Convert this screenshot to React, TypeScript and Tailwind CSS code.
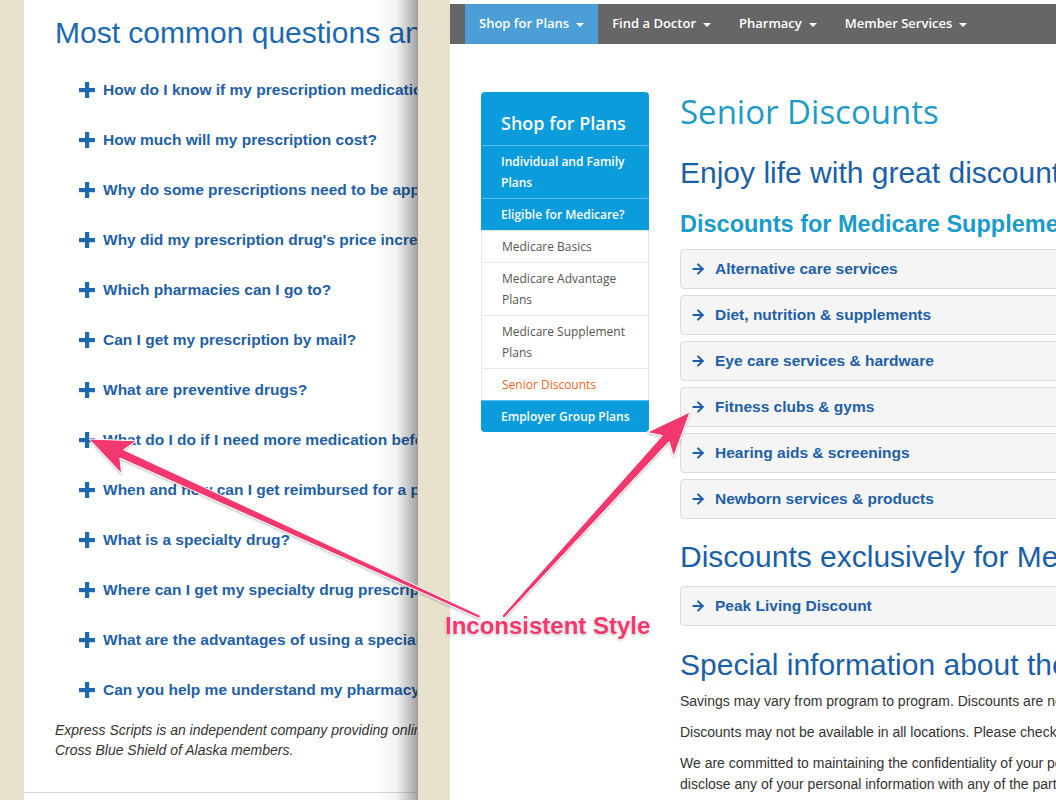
import { ArrowRight } from 'lucide-react';

const faqs = [
  'How do I know if my prescription medication is covered?',
  'How much will my prescription cost?',
  'Why do some prescriptions need to be approved?',
  "Why did my prescription drug's price increase?",
  'Which pharmacies can I go to?',
  'Can I get my prescription by mail?',
  'What are preventive drugs?',
  'What do I do if I need more medication before I can refill?',
  'When and how can I get reimbursed for a prescription?',
  'What is a specialty drug?',
  'Where can I get my specialty drug prescription filled?',
  'What are the advantages of using a specialty pharmacy?',
  'Can you help me understand my pharmacy benefits?',
];

const navItems = ['Shop for Plans', 'Find a Doctor', 'Pharmacy', 'Member Services'];

const sideItems = [
  { label: 'Individual and Family Plans', kind: 'blue' },
  { label: 'Eligible for Medicare?', kind: 'blue' },
  { label: 'Medicare Basics', kind: 'plain' },
  { label: 'Medicare Advantage Plans', kind: 'plain' },
  { label: 'Medicare Supplement Plans', kind: 'plain' },
  { label: 'Senior Discounts', kind: 'active' },
  { label: 'Employer Group Plans', kind: 'blue' },
];

const supplementDiscounts = [
  'Alternative care services',
  'Diet, nutrition & supplements',
  'Eye care services & hardware',
  'Fitness clubs & gyms',
  'Hearing aids & screenings',
  'Newborn services & products',
];

const helvetica = { fontFamily: '"Liberation Sans", Arial, sans-serif' };
const segoe = { fontFamily: '"Open Sans", "Liberation Sans", sans-serif' };

const PlusIcon = () => (
  <svg width="16" height="16" viewBox="0 0 16 16" className="shrink-0">
    <rect x="6" y="0" width="4.2" height="16" fill="#1e68b0" />
    <rect x="0" y="6" width="16" height="4.2" fill="#1e68b0" />
  </svg>
);

const Caret = () => (
  <svg width="8" height="4" viewBox="0 0 8 4" className="shrink-0 mt-[2px]">
    <polygon points="0,0 8,0 4,4" fill="white" />
  </svg>
);

// skitch-style tapering arrow
function arrowPoints(tail: [number, number], tip: [number, number]) {
  const dx = tip[0] - tail[0];
  const dy = tip[1] - tail[1];
  const len = Math.hypot(dx, dy);
  const ux = dx / len;
  const uy = dy / len;
  const px = -uy;
  const py = ux;
  const headLen = 44;
  const headW = 18;
  const notch = 8;
  const bx = tip[0] - ux * headLen;
  const by = tip[1] - uy * headLen;
  const nx = tip[0] - ux * (headLen - notch);
  const ny = tip[1] - uy * (headLen - notch);
  const wHead = 4.5;
  const wTail = 1.5;
  const pts: [number, number][] = [
    [tail[0] + px * wTail, tail[1] + py * wTail],
    [nx + px * wHead, ny + py * wHead],
    [bx + px * headW, by + py * headW],
    [tip[0], tip[1]],
    [bx - px * headW, by - py * headW],
    [nx - px * wHead, ny - py * wHead],
    [tail[0] - px * wTail, tail[1] - py * wTail],
  ];
  return pts.map((p) => `${p[0].toFixed(1)},${p[1].toFixed(1)}`).join(' ');
}

const LeftWindow = () => (
  <div className="relative ml-[24px] w-[394px] shrink-0 bg-white flex flex-col overflow-hidden whitespace-nowrap" style={helvetica}>
    <h1 className="pt-[15px] pl-[31px] text-[30px] leading-[36px] text-[#1b69b3]">Most common questions and answers</h1>
    <ul className="mt-[14px] pl-[55px]">
      {faqs.map((q) => (
        <li key={q} className="h-[50px] flex items-center gap-[8px]">
          <PlusIcon />
          <span className="text-[15.5px] font-bold text-[#1e5fa7]">{q}</span>
        </li>
      ))}
    </ul>
    <p className="mt-[5px] pl-[31px] text-[14px] leading-[20px] italic text-[#333]">
      Express Scripts is an independent company providing online pharmacy services to Blue
      <br />
      Cross Blue Shield of Alaska members.
    </p>
    <div className="mt-auto h-[8px] border-t border-[#d9d9d9]" />
    <div className="absolute right-0 top-0 bottom-0 w-[42px] bg-linear-to-r from-white/0 via-black/5 to-black/35 border-r border-[#9a9a9a]" />
  </div>
);

const Sidebar = () => (
  <div className="w-[168px] shrink-0 rounded-[4px] overflow-hidden self-start whitespace-normal" style={segoe}>
    <div className="h-[53px] bg-[#0b9cdb] flex items-end pb-[10px] px-[20px]">
      <span className="text-[18px] leading-[24px] font-semibold text-white whitespace-nowrap">Shop for Plans</span>
    </div>
    {sideItems.map((it) => (
      <div
        key={it.label}
        className={
          it.kind === 'blue'
            ? 'border-t border-[#5cc0ea] bg-[#0b9cdb] pl-[20px] pr-[8px] py-[5px] text-[12px] leading-[21px] font-semibold text-white'
            : it.kind === 'active'
              ? 'border-t border-x border-[#e6e6e6] bg-white px-[20px] py-[5px] text-[12px] leading-[21px] text-[#e8671e]'
              : 'border-t border-x border-[#e6e6e6] bg-white px-[20px] py-[5px] text-[12px] leading-[21px] text-[#555]'
        }
      >
        {it.label}
      </div>
    ))}
  </div>
);

const DiscountRow = ({ label }: { label: string }) => (
  <div className="h-[40px] w-[520px] flex items-center gap-[9px] pl-[9px] rounded-[4px] border border-[#dcdcdc] bg-[#f5f5f5]">
    <ArrowRight size={16} strokeWidth={3} className="text-[#1e5fa7] shrink-0" />
    <span className="text-[15.5px] font-bold text-[#1e5fa7]">{label}</span>
  </div>
);

const RightWindow = () => (
  <div className="ml-[32px] flex-1 min-w-0 bg-white overflow-hidden whitespace-nowrap pt-[4px]">
    <nav className="h-[40px] bg-[#666666] flex items-stretch pl-[15px]" style={segoe}>
      {navItems.map((n, i) => (
        <div
          key={n}
          className={
            i === 0
              ? 'flex items-center gap-[7px] px-[14px] bg-[#4b9fd6] text-white text-[13px] font-semibold'
              : 'flex items-center gap-[7px] px-[14px] text-white text-[13px] font-semibold'
          }
        >
          {n}
          <Caret />
        </div>
      ))}
    </nav>
    <div className="flex gap-[31px] pl-[31px] pt-[48px]">
      <Sidebar />
      <main className="flex flex-col" style={helvetica}>
        <h1 className="text-[33px] leading-[40px] text-[#1d9bc5]" style={segoe}>Senior Discounts</h1>
        <h2 className="mt-[23px] text-[30px] leading-[36px] text-[#1b5fa6]">Enjoy life with great discounts on health and wellness</h2>
        <h3 className="mt-[19px] text-[23.5px] leading-[28px] font-bold text-[#1a9bca]">Discounts for Medicare Supplement members</h3>
        <div className="mt-[11px] flex flex-col gap-[6px]">
          {supplementDiscounts.map((d) => (
            <DiscountRow key={d} label={d} />
          ))}
        </div>
        <h2 className="mt-[20px] text-[30px] leading-[36px] text-[#1b5fa6]">Discounts exclusively for Medicare members</h2>
        <div className="mt-[11px]">
          <DiscountRow label="Peak Living Discount" />
        </div>
        <h2 className="mt-[21px] text-[30px] leading-[36px] text-[#1b5fa6]">Special information about these discounts</h2>
        <div className="mt-[8px] flex flex-col gap-[10px] text-[14px] leading-[21px] text-[#333]">
          <p>Savings may vary from program to program. Discounts are not insurance.</p>
          <p>Discounts may not be available in all locations. Please check with the provider.</p>
          <p>
            We are committed to maintaining the confidentiality of your personal information and will not
            <br />
            disclose any of your personal information with any of the participating providers.
          </p>
        </div>
      </main>
    </div>
  </div>
);

export default function App() {
  return (
    <div className="relative w-[1056px] h-[800px] overflow-hidden bg-[#e7e1cd] flex">
      <LeftWindow />
      <RightWindow />
      <svg className="absolute inset-0 pointer-events-none" width="1056" height="800" viewBox="0 0 1056 800">
        <defs>
          <filter id="sh" x="-10%" y="-10%" width="120%" height="120%">
            <feDropShadow dx="0" dy="1" stdDeviation="1.2" floodColor="#000" floodOpacity="0.3" />
          </filter>
        </defs>
        <g filter="url(#sh)" fill="#f2386e" stroke="white" strokeWidth="1" strokeLinejoin="round">
          <polygon points={arrowPoints([480, 617], [89, 439])} />
          <polygon points={arrowPoints([503, 617], [690, 412])} />
        </g>
      </svg>
      <div
        className="absolute left-[445px] top-[612px] text-[24px] leading-[28px] font-bold text-[#f2386e] whitespace-nowrap [text-shadow:0_0_2px_white,0_0_2px_white,0_1px_3px_rgba(0,0,0,0.35)]"
        style={helvetica}
      >
        Inconsistent Style
      </div>
    </div>
  );
}
